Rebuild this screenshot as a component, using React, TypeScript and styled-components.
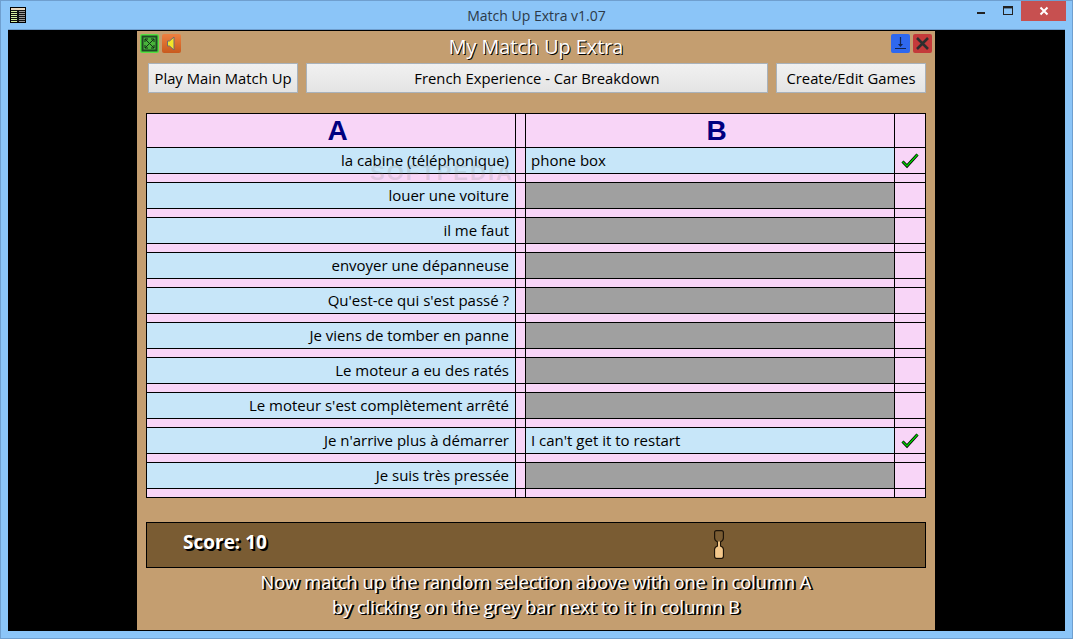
import React from 'react';
import styled, { createGlobalStyle } from 'styled-components';

const Global = createGlobalStyle`
  html, body { margin: 0; padding: 0; background: #8bc5f8; }
  body { width: 1073px; height: 639px; overflow: hidden; }
`;

const FONT = `"Open Sans", "Noto Sans", sans-serif`;

const Frame = styled.div`
  width: 1073px;
  height: 639px;
  box-sizing: border-box;
  display: flex;
  flex-direction: column;
  background: #8bc5f8;
  border: 1px solid #6f9fcf;
`;

const TitleBar = styled.div`
  position: relative;
  height: 29px;
  flex: none;
  display: flex;
  align-items: center;
  justify-content: center;
  font: 14px "Open Sans", sans-serif;
  color: #2c3a48;
`;

const AppIcon = styled.svg`
  position: absolute;
  left: 9px;
  top: 6px;
`;

const WinButtons = styled.div`
  position: absolute;
  right: 6px;
  top: 0;
  display: flex;
  height: 20px;
`;

const WinButton = styled.div<{ $w: number; $close?: boolean }>`
  width: ${(p) => p.$w}px;
  height: 20px;
  display: flex;
  align-items: center;
  justify-content: center;
  background: ${(p) => (p.$close ? '#c75050' : 'transparent')};
`;

const Client = styled.div`
  flex: 1;
  margin: 0 7px 7px;
  background: #000;
  border: 0;
  box-shadow: 0 -1px 0 #6f9fcf;
  display: flex;
  justify-content: center;
  padding: 1px 1px 1px 0;
`;

const Panel = styled.div`
  width: 798px;
  box-sizing: border-box;
  padding: 3px 9px 0;
  background: #c49e70;
  font-family: ${FONT};
`;

const TopRow = styled.div`
  display: flex;
  align-items: center;
  justify-content: space-between;
  height: 19px;
  margin: 0 -6px;
`;

const IconGroup = styled.div`
  display: flex;
  gap: 3px;
`;

const SquareIcon = styled.svg`
  display: block;
  width: 19px;
  height: 19px;
`;

const AppTitle = styled.div`
  margin-top: 5px;
  color: #fff;
  font-size: 19.8px;
  line-height: 19px;
  text-shadow: 1px 1px 0 #000;
`;

const ButtonRow = styled.div`
  display: flex;
  gap: 8px;
  margin: 10px 0 0 2px;
`;

const PlainButton = styled.button<{ $w: number }>`
  width: ${(p) => p.$w}px;
  height: 30px;
  padding: 0;
  background: linear-gradient(#f1f1f1, #e4e4e4);
  border: 1px solid #a9b2bb;
  font: 14.8px ${FONT};
  color: #000;
`;

const Board = styled.div`
  position: relative;
  margin-top: 20px;
  display: grid;
  grid-template-columns: 369px 10px 369px 30px;
  border: 1px solid #000;
  background: #f8d5f7;
`;

const Cell = styled.div<{ $kind?: 'word' | 'grey' | 'plain'; $last?: boolean; $noBottom?: boolean; $gap?: boolean }>`
  box-sizing: border-box;
  height: ${(p) => (p.$gap ? (p.$noBottom ? 8 : 9) : 26)}px;
  display: flex;
  align-items: center;
  padding: 0 5px ${(p) => (p.$gap ? 0 : 2)}px;
  font-size: 15px;
  color: #000;
  white-space: nowrap;
  border-right: ${(p) => (p.$last ? 0 : '1px solid #000')};
  border-bottom: ${(p) => (p.$noBottom ? 0 : '1px solid #000')};
  background: ${(p) =>
    p.$kind === 'word' ? '#c7e6f9' : p.$kind === 'grey' ? '#a0a0a0' : 'transparent'};
`;

const LeftCell = styled(Cell)`
  justify-content: flex-end;
  padding-right: 6px;
`;

const SpacerCell = styled(Cell)`
  min-width: 0;
  padding: 0;
`;

const HeadCell = styled.div<{ $last?: boolean; $letter?: boolean }>`
  box-sizing: border-box;
  min-width: 0;
  height: 34px;
  padding-left: ${(p) => (p.$letter ? 13 : 0)}px;
  display: flex;
  align-items: center;
  justify-content: center;
  font: bold 28px "Liberation Sans", Arial, sans-serif;
  color: #000080;
  border-right: ${(p) => (p.$last ? 0 : '1px solid #000')};
  border-bottom: 1px solid #000;
`;

const Watermark = styled.div`
  position: absolute;
  left: 223px;
  top: 46px;
  font: bold 22px "Liberation Sans", sans-serif;
  letter-spacing: 2px;
  color: rgba(130, 130, 130, 0.2);
  pointer-events: none;
`;

const ScoreBar = styled.div`
  margin-top: 24px;
  height: 46px;
  box-sizing: border-box;
  border: 1px solid #000;
  background: #7a5c33;
  position: relative;
  display: flex;
  align-items: center;
  padding: 0 0 6px 36px;
`;

const ScoreText = styled.div`
  color: #fff;
  font-size: 19px;
  font-weight: 700;
  text-shadow: 1px 1px 0 #000, 2px 2px 0 #000;
`;

const Timer = styled.svg`
  position: absolute;
  left: 567px;
  top: 7px;
`;

const Help = styled.div`
  margin-top: 1px;
  text-align: center;
  color: #fff;
  font-size: 18.3px;
  line-height: 25px;
  text-shadow: 1px 1px 0 #000, 2px 1px 0 #000;
`;

const Tick = () => (
  <svg width="20" height="18" viewBox="0 0 20 18">
    <path d="M2.5 10.5 L7 15 L17.5 3.5" fill="none" stroke="#000" strokeWidth="3" />
    <path d="M2.5 10.5 L7 15 L17.5 3.5" fill="none" stroke="#00d800" strokeWidth="1.4" />
  </svg>
);

const rows: { a: string; b?: string }[] = [
  { a: 'la cabine (téléphonique)', b: 'phone box' },
  { a: 'louer une voiture' },
  { a: 'il me faut' },
  { a: 'envoyer une dépanneuse' },
  { a: "Qu'est-ce qui s'est passé ?" },
  { a: 'Je viens de tomber en panne' },
  { a: 'Le moteur a eu des ratés' },
  { a: "Le moteur s'est complètement arrêté" },
  { a: "Je n'arrive plus à démarrer", b: "I can't get it to restart" },
  { a: 'Je suis très pressée' },
];

export default function App() {
  return (
    <Frame>
      <Global />
      <TitleBar>
        <AppIcon width="16" height="16" viewBox="0 0 16 16">
          <rect x="0.5" y="0.5" width="15" height="15" fill="#111" stroke="#000" />
          <rect x="1" y="1" width="14" height="2" fill="#e8d8c0" />
          {[4, 6, 8, 10, 12, 14].map((y) => (
            <g key={y}>
              <rect x="1" y={y} width="6" height="1" fill="#d8f0a0" />
              <rect x="9" y={y} width="6" height="1" fill="#999" />
            </g>
          ))}
        </AppIcon>
        Match Up Extra v1.07
        <WinButtons>
          <WinButton $w={28}>
            <svg width="10" height="10" viewBox="0 0 10 10"><rect x="1" y="6" width="8" height="2" fill="#222" /></svg>
          </WinButton>
          <WinButton $w={26}>
            <svg width="11" height="10" viewBox="0 0 11 10"><rect x="0.5" y="0.5" width="9" height="8" fill="none" stroke="#222" /><rect x="0" y="0" width="10" height="2.4" fill="#222" /></svg>
          </WinButton>
          <WinButton $w={45} $close>
            <svg width="10" height="10" viewBox="0 0 10 10"><path d="M1.5 1.5 L8.5 8.5 M8.5 1.5 L1.5 8.5" stroke="#fff" strokeWidth="2" /></svg>
          </WinButton>
        </WinButtons>
      </TitleBar>
      <Client>
        <Panel>
          <TopRow>
            <IconGroup>
              <SquareIcon viewBox="0 0 19 19">
                <rect width="19" height="19" rx="2" fill="#55e040" />
                <rect x="2.5" y="2.5" width="14" height="14" fill="#48b43a" stroke="#1f4a24" strokeWidth="2" />
                <path d="M5 5 L14 14 M14 5 L5 14 M5 5 h3 M5 5 v3 M14 5 h-3 M14 5 v3 M5 14 h3 M5 14 v-3 M14 14 h-3 M14 14 v-3" stroke="#143018" strokeWidth="1" fill="none" />
              </SquareIcon>
              <SquareIcon viewBox="0 0 19 19">
                <defs>
                  <linearGradient id="orangeFace" x1="0" y1="0" x2="0" y2="1">
                    <stop offset="0" stopColor="#ee8040" />
                    <stop offset="1" stopColor="#c85a1e" />
                  </linearGradient>
                </defs>
                <rect width="19" height="19" rx="2" fill="url(#orangeFace)" />
                <path d="M5.5 7 L7.5 7 L12 3 L12 16 L7.5 12 L5.5 12 Z" fill="#f2e42a" stroke="#6f6a70" strokeWidth="1" />
              </SquareIcon>
            </IconGroup>
            <AppTitle>My Match Up Extra</AppTitle>
            <IconGroup>
              <SquareIcon viewBox="0 0 19 19">
                <rect width="19" height="19" rx="2" fill="#2f68ee" />
                <path d="M9.5 3 V12 M4 14.5 H15" stroke="#12244e" strokeWidth="1.2" />
                <path d="M7 10 H12 L9.5 13 Z" fill="#12244e" />
              </SquareIcon>
              <SquareIcon viewBox="0 0 19 19">
                <rect width="19" height="19" rx="2" fill="#c43a3a" />
                <path d="M4 4 L15 15 M15 4 L4 15" stroke="#2e2e2e" strokeWidth="2.6" />
              </SquareIcon>
            </IconGroup>
          </TopRow>
          <ButtonRow>
            <PlainButton $w={150}>Play Main Match Up</PlainButton>
            <PlainButton $w={462}>French Experience - Car Breakdown</PlainButton>
            <PlainButton $w={150}>Create/Edit Games</PlainButton>
          </ButtonRow>
          <Board>
            <HeadCell $letter>A</HeadCell>
            <HeadCell />
            <HeadCell $letter>B</HeadCell>
            <HeadCell $last />
            {rows.map((r, i) => {
              const end = i === rows.length - 1;
              return (
                <React.Fragment key={r.a}>
                  <LeftCell $kind="word">{r.a}</LeftCell>
                  <SpacerCell />
                  <Cell $kind={r.b ? 'word' : 'grey'}>{r.b}</Cell>
                  <Cell $last>{r.b && <Tick />}</Cell>
                  <SpacerCell $gap $noBottom={end} />
                  <SpacerCell $gap $noBottom={end} />
                  <SpacerCell $gap $noBottom={end} />
                  <SpacerCell $gap $noBottom={end} $last />
                </React.Fragment>
              );
            })}
            <Watermark>SOFTPEDIA</Watermark>
          </Board>
          <ScoreBar>
            <ScoreText>Score: 10</ScoreText>
            <Timer width="10" height="29" viewBox="0 0 10 29">
              <path d="M2.5 0.6 H7.5 Q9.4 0.6 9.4 2.5 V8 Q9.4 10.5 6.5 12 V16 Q9.4 17 9.4 19.5 V26 Q9.4 28.4 7.5 28.4 H2.5 Q0.6 28.4 0.6 26 V19.5 Q0.6 17 3.5 16 V12 Q0.6 10.5 0.6 8 V2.5 Q0.6 0.6 2.5 0.6 Z" fill="#7a5c33" stroke="#1e1408" strokeWidth="1.2" />
              <path d="M4 11.5 H6 V16.5 Q8.8 17.5 8.8 19.5 V26 Q8.8 27.8 7.5 27.8 H2.5 Q1.2 27.8 1.2 26 V19.5 Q1.2 17.5 4 16.5 Z" fill="#f4c88c" />
            </Timer>
          </ScoreBar>
          <Help>
            Now match up the random selection above with one in column A
            <br />
            by clicking on the grey bar next to it in column B
          </Help>
        </Panel>
      </Client>
    </Frame>
  );
}
